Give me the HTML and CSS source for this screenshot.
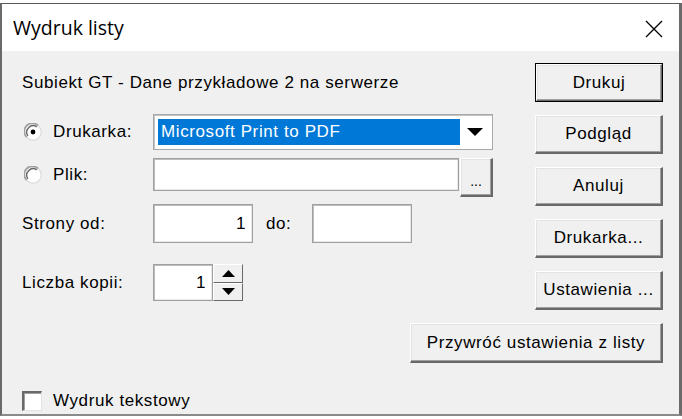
FILE: index.html
```html
<!DOCTYPE html>
<html lang="pl">
<head>
<meta charset="utf-8">
<title>Wydruk listy</title>
<link rel="stylesheet" href="styles.css">
</head>
<body>
<div class="window">
  <div class="titlebar">
    <span class="title">Wydruk listy</span>
    <svg class="close" width="18" height="18" viewBox="0 0 18 18"><path d="M1 1 L17 17 M17 1 L1 17" stroke="#000" stroke-width="1.3" fill="none"/></svg>
  </div>
  <div class="content">
    <div class="top">
      <div class="form">
        <div class="info">Subiekt GT - Dane przykładowe 2 na serwerze</div>
        <div class="row printer-row">
          <div class="radio-label">
            <svg class="radio" width="18" height="18" viewBox="0 0 18 18"><circle cx="9" cy="9" r="8.2" fill="#fff" stroke="#dcdcdc" stroke-width="1.2"/><path d="M2.6 14.2 A8 8 0 0 1 14.2 2.6" stroke="#a0a0a0" stroke-width="1.6" fill="none"/><path d="M3.9 12.8 A6.4 6.4 0 0 1 12.8 3.9" stroke="#696969" stroke-width="1.4" fill="none"/><circle cx="9" cy="9" r="2.4" fill="#000"/></svg>
            <span>Drukarka:</span>
          </div>
          <div class="combo">
            <div class="combo-sel">Microsoft Print to PDF</div>
            <svg class="combo-arrow" width="16" height="8" viewBox="0 0 16 8"><path d="M0 0 H16 L8 8 Z" fill="#000"/></svg>
          </div>
        </div>
        <div class="row file-row">
          <div class="radio-label">
            <svg class="radio" width="18" height="18" viewBox="0 0 18 18"><circle cx="9" cy="9" r="8.2" fill="#fff" stroke="#dcdcdc" stroke-width="1.2"/><path d="M2.6 14.2 A8 8 0 0 1 14.2 2.6" stroke="#a0a0a0" stroke-width="1.6" fill="none"/><path d="M3.9 12.8 A6.4 6.4 0 0 1 12.8 3.9" stroke="#696969" stroke-width="1.4" fill="none"/></svg>
            <span>Plik:</span>
          </div>
          <div class="field file-field"></div>
          <div class="btn browse">...</div>
        </div>
        <div class="row pages-row">
          <span class="label">Strony od:</span>
          <div class="field num-field">1</div>
          <span class="do">do:</span>
          <div class="field num-field"></div>
        </div>
        <div class="row copies-row">
          <span class="label">Liczba kopii:</span>
          <div class="field copies-field">1</div>
          <div class="spinner">
            <div class="spin"><svg width="13" height="7" viewBox="0 0 13 7"><path d="M0 7 H13 L6.5 0 Z" fill="#000"/></svg></div>
            <div class="spin"><svg width="13" height="7" viewBox="0 0 13 7"><path d="M0 0 H13 L6.5 7 Z" fill="#000"/></svg></div>
          </div>
        </div>
      </div>
      <div class="buttons">
        <div class="btn big default">Drukuj</div>
        <div class="btn big">Podgląd</div>
        <div class="btn big">Anuluj</div>
        <div class="btn big">Drukarka...</div>
        <div class="btn big">Ustawienia ...</div>
      </div>
    </div>
    <div class="restore-row">
      <div class="btn restore">Przywróć ustawienia z listy</div>
    </div>
    <div class="check-row">
      <span class="checkbox"></span>
      <span>Wydruk tekstowy</span>
    </div>
  </div>
</div>
</body>
</html>
```
FILE: styles.css
```css
* { box-sizing: border-box; }
html, body { margin: 0; padding: 0; }
body {
  width: 682px;
  height: 419px;
  background: #ffffff;
  overflow: hidden;
  font-family: "Liberation Sans", Arial, sans-serif;
  font-size: 17px;
  letter-spacing: 0.6px;
  color: #000;
}
.window {
  margin-top: 3px;
  width: 682px;
  height: 413px;
  border: 1px solid #5a5a5a;
  border-left: 2px solid #6a6a6a;
  border-right: 3px solid #6a6a6a;
  border-bottom: 2px solid #8a8a8a;
  display: flex;
  flex-direction: column;
}
.titlebar {
  height: 47px;
  background: #fff;
  display: flex;
  align-items: center;
  justify-content: space-between;
  padding-left: 11px;
  padding-right: 16px;
  flex: none;
}
.title {
  font-family: "Open Sans", "Noto Sans", sans-serif;
  font-size: 19.5px;
  letter-spacing: 0;
  color: #000;
}
.close { margin-top: 2px; }
.content {
  flex: 1;
  background: #f0f0f0;
  display: flex;
  flex-direction: column;
}
.top {
  display: flex;
  justify-content: space-between;
}
.form {
  padding-left: 20px;
  padding-top: 22px;
  display: flex;
  flex-direction: column;
}
.info { height: 20px; line-height: 20px; }
.row { display: flex; align-items: center; }
.printer-row { margin-top: 21px; height: 36px; }
.file-row { margin-top: 8px; height: 40px; align-items: flex-start; }
.radio-label {
  width: 131px;
  display: flex;
  align-items: center;
  gap: 11px;
  padding-left: 2px;
}
.file-row .radio-label { height: 33px; }
.radio { flex: none; }
.combo {
  width: 340px;
  height: 36px;
  background: #fff;
  border: 1px solid #a8a8a8;
  box-shadow: inset 1px 1px #c4c4c4;
  display: flex;
  align-items: center;
  padding: 0 9px 0 4px;
  gap: 7px;
}
.combo-sel {
  flex: 1;
  height: 26px;
  background: #0078d7;
  color: #fff;
  line-height: 26px;
  padding-left: 3px;
}
.field {
  background: #fff;
  border: 1px solid #a0a0a0;
  box-shadow: inset 1px 1px #bdbdbd, inset -1px -1px #e8e8e8;
  line-height: 20px;
  text-align: right;
  padding: 0 6px;
}
.file-field { width: 306px; height: 33px; }
.btn {
  background: #f0f0f0;
  border-top: 1px solid #fff;
  border-left: 1px solid #fff;
  border-right: 2px solid #696969;
  border-bottom: 2px solid #696969;
  box-shadow: inset -1px -1px #a0a0a0, inset 1px 1px #e3e3e3;
  display: flex;
  align-items: center;
  justify-content: center;
}
.browse {
  width: 33px;
  height: 39px;
  margin-left: 1px;
  font-size: 14px;
  letter-spacing: 0;
  padding-top: 8px;
}
.pages-row { margin-top: 6px; height: 39px; }
.label { width: 131px; }
.num-field {
  width: 100px;
  height: 39px;
  line-height: 37px;
}
.do { width: 59px; padding-left: 13px; }
.copies-row { margin-top: 21px; height: 37px; }
.copies-field { width: 60px; height: 37px; line-height: 35px; }
.spinner {
  width: 30px;
  height: 37px;
  display: flex;
  flex-direction: column;
}
.spin {
  flex: 1;
  background: #f0f0f0;
  border-top: 1px solid #fff;
  border-left: 1px solid #fff;
  border-right: 1px solid #696969;
  border-bottom: 1px solid #696969;
  display: flex;
  align-items: center;
  justify-content: center;
}
.buttons {
  padding-top: 12px;
  padding-right: 16px;
  display: flex;
  flex-direction: column;
  gap: 13px;
}
.big { width: 128px; height: 39px; }
.default {
  outline: 1px solid #000;
  outline-offset: -1px;
  border-top: 2px solid #fff;
  border-left: 2px solid #fff;
}
.restore-row {
  display: flex;
  justify-content: flex-end;
  padding-right: 16px;
  margin-top: 13px;
}
.restore { width: 253px; height: 40px; }
.check-row {
  margin-top: 28px;
  padding-left: 20px;
  display: flex;
  align-items: center;
  gap: 11px;
}
.checkbox {
  width: 20px;
  height: 20px;
  background: #fff;
  border-top: 2px solid #696969;
  border-left: 2px solid #696969;
  border-right: 1px solid #e3e3e3;
  border-bottom: 1px solid #e3e3e3;
  box-shadow: inset 1px 1px #a0a0a0;
}
```
